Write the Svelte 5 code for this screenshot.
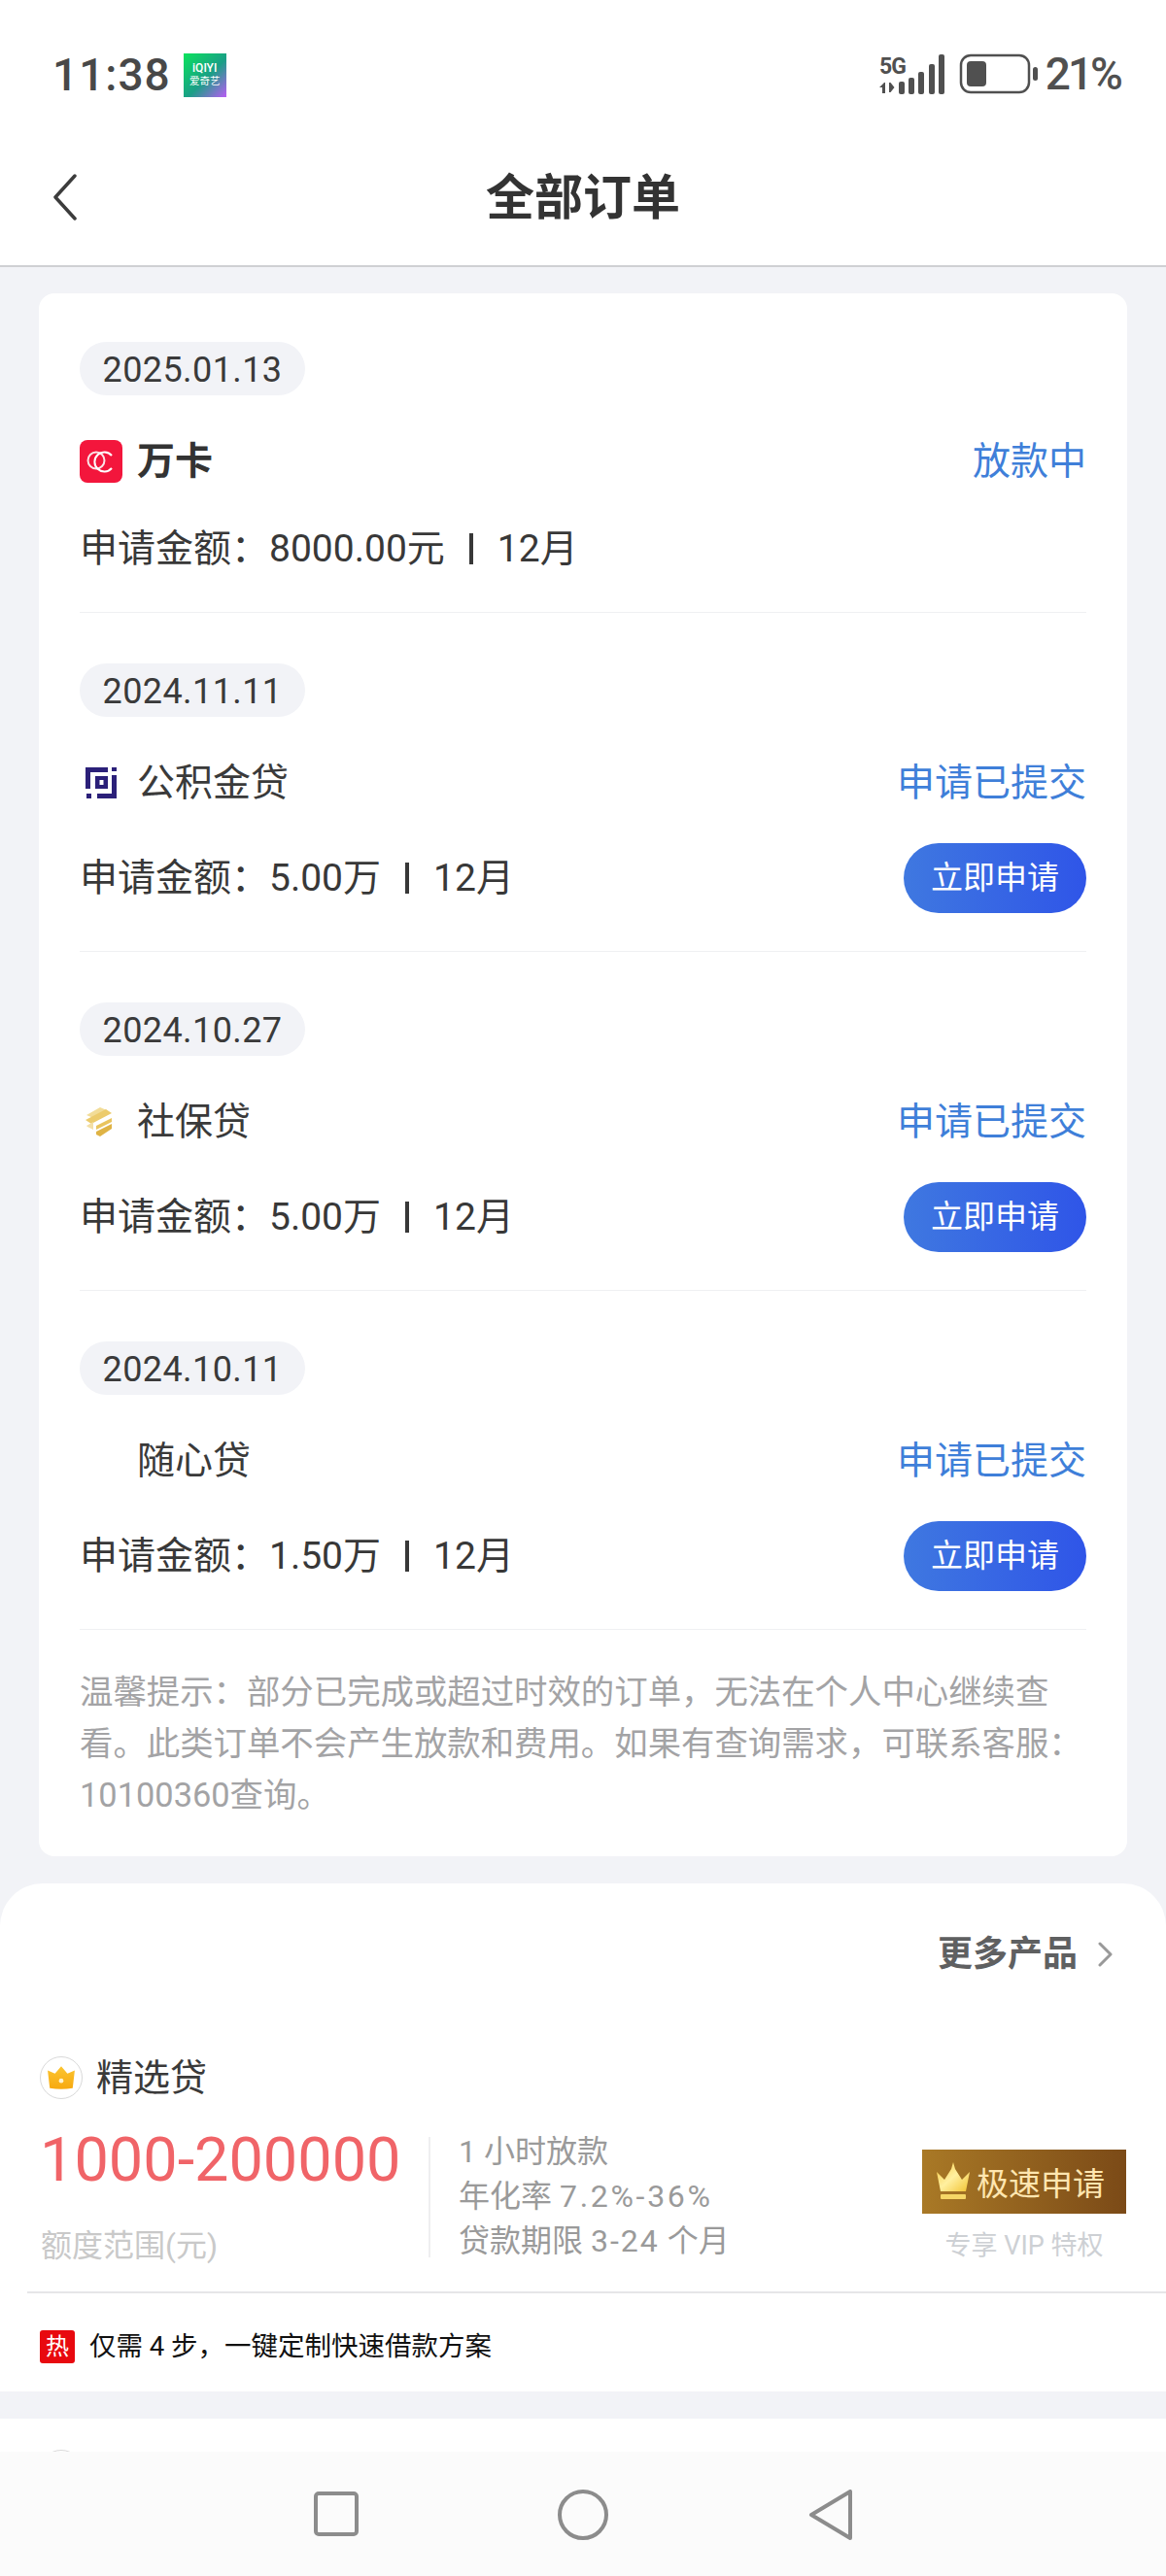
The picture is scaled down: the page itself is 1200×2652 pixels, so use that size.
<script>
  const orders = [
    { date: '2025.01.13', name: '万卡', bold: true, status: '放款中', amount: '8000.00元', term: '12月', logo: 'wanka', apply: false },
    { date: '2024.11.11', name: '公积金贷', status: '申请已提交', amount: '5.00万', term: '12月', logo: 'gjj', apply: true },
    { date: '2024.10.27', name: '社保贷', status: '申请已提交', amount: '5.00万', term: '12月', logo: 'sb', apply: true },
    { date: '2024.10.11', name: '随心贷', status: '申请已提交', amount: '1.50万', term: '12月', logo: '', apply: true }
  ];
</script>

<div class="page">
  <header class="top">
    <div class="status">
      <div class="status-left">
        <span class="time">11:38</span>
        <div class="iqiyi"><b>iQIYI</b><i>爱奇艺</i></div>
      </div>
      <div class="status-right">
        <svg width="70" height="42" viewBox="0 0 70 42" fill="#505050">
          <text x="1" y="21" class="net">5G</text>
          <path d="M6 30l-5 5h3v6h3V30zM11 30h1.500l4 5-4 5H11z" />
          <rect x="21" y="29" width="6" height="13" rx="2" />
          <rect x="31" y="25" width="6" height="17" rx="2" />
          <rect x="41" y="19" width="6" height="23" rx="2" />
          <rect x="52" y="11" width="6" height="31" rx="2" />
          <rect x="62" y="1" width="6" height="41" rx="2" />
        </svg>
        <svg class="battery" width="82" height="42" viewBox="0 0 82 42">
          <rect x="2" y="2" width="70" height="38" rx="10" fill="none" stroke="#505050" stroke-width="2.500" />
          <rect x="8" y="8" width="20" height="26" rx="4" fill="#505050" />
          <rect x="76" y="14" width="5" height="14" rx="2.500" fill="#505050" />
        </svg>
        <span class="pct">21%</span>
      </div>
    </div>
    <div class="titlebar">
      <svg class="back" width="26" height="48" viewBox="0 0 26 48" fill="none" stroke="#3c3c3c" stroke-width="3.500" stroke-linecap="round" stroke-linejoin="round">
        <path d="M23 2L3 24l20 22" />
      </svg>
      <h1>全部订单</h1>
    </div>
  </header>

  <main class="content">
    <section class="card">
      {#each orders as o}
        <article class="order" class:has-btn={o.apply}>
          <div class="date">{o.date}</div>
          <div class="row name-row">
            <div class="name">
              <span class="logo">
                {#if o.logo === 'wanka'}
                  <svg width="44" height="44" viewBox="0 0 44 44">
                    <rect width="44" height="44" rx="8" fill="#f3163c" />
                    <circle cx="17" cy="21" r="8.500" fill="none" stroke="#fbe3e6" stroke-width="2" />
                    <path d="M33 16a10 10 0 1 0 0 13" fill="none" stroke="#fff" stroke-width="2" />
                  </svg>
                {:else if o.logo === 'gjj'}
                  <svg class="inset" width="34" height="34" viewBox="0 0 34 34" fill="#2b2079">
                    <path d="M1 1h23v5H6v17H1z" />
                    <path d="M11 10h13v13H11zM15.500 14v5h4v-5z" fill-rule="evenodd" />
                    <rect x="28" y="1" width="5" height="4" />
                    <path d="M28 9h5v24H13v-5h15z" />
                    <rect x="2" y="28" width="5" height="5" />
                  </svg>
                {:else if o.logo === 'sb'}
                  <svg class="inset" width="30" height="32" viewBox="0 0 30 32">
                    <path d="M2 9L16 1l7 3L9 12z" fill="#f2dc97" />
                    <path d="M1 14L22 3l6 4-21 11z" fill="#eccb6c" />
                    <path d="M2 20L9 16v8l-6-3z" fill="#f3dfa5" />
                    <path d="M12 20l16-8v4L12 24z" fill="#e9c45e" />
                    <path d="M12 26l16-8v5L16 31l-4-2z" fill="#dfb345" />
                  </svg>
                {/if}
              </span>
              <span class:bold={o.bold}>{o.name}</span>
            </div>
            <span class="state">{o.status}</span>
          </div>
          <div class="row amount-row">
            <p class="amount">申请金额：{o.amount}<span class="sep"></span>{o.term}</p>
            {#if o.apply}
              <span class="apply">立即申请</span>
            {/if}
          </div>
        </article>
      {/each}
      <p class="hint">温馨提示：部分已完成或超过时效的订单，无法在个人中心继续查看。此类订单不会产生放款和费用。如果有查询需求，可联系客服：10100360查询。</p>
    </section>

    <section class="sheet">
      <div class="more">
        <span>更多产品</span>
        <svg width="16" height="26" viewBox="0 0 16 26" fill="none" stroke="#999" stroke-width="3" stroke-linecap="round" stroke-linejoin="round"><path d="M2 2l11 11L2 24" /></svg>
      </div>
      <div class="product-name">
        <span class="crown-badge">
          <svg width="30" height="26" viewBox="0 0 28 24">
            <defs>
              <linearGradient id="cr" x1="0" y1="0" x2="0" y2="1">
                <stop offset="0" stop-color="#fbc531" />
                <stop offset="1" stop-color="#f7a90f" />
              </linearGradient>
            </defs>
            <path d="M14 1l6 7 7-3-2 17q-11 2-22 0L1 5l7 3z" fill="url(#cr)" />
            <circle cx="14" cy="15" r="2.200" fill="#fff3cf" />
          </svg>
        </span>
        <span>精选贷</span>
      </div>
      <div class="product">
        <div class="range">
          <div class="big">1000-200000</div>
          <div class="range-label">额度范围(元)</div>
        </div>
        <div class="facts">
          <span>1 小时放款</span>
          <span>年化率 <em>7.2%-36%</em></span>
          <span>贷款期限 <em class="tight">3-24</em> 个月</span>
        </div>
        <div class="cta">
          <div class="gold">
            <svg width="36" height="40" viewBox="0 0 36 40">
              <defs>
                <linearGradient id="gc" x1="0" y1="0" x2="1" y2="1">
                  <stop offset="0" stop-color="#f7c93e" />
                  <stop offset="0.500" stop-color="#fff0a0" />
                  <stop offset="1" stop-color="#f2c230" />
                </linearGradient>
              </defs>
              <path d="M18 0l2 7 7 11 8-8-4 20H5L1 10l8 8 7-11z" fill="url(#gc)" />
              <rect x="5" y="33" width="26" height="5" rx="1" fill="#f6d766" />
            </svg>
            <span>极速申请</span>
          </div>
          <div class="vip">专享 VIP 特权</div>
        </div>
      </div>
      <div class="tip">
        <span class="hot">热</span>
        <span>仅需 4 步，一键定制快速借款方案</span>
      </div>
    </section>
    <div class="band"></div>
    <div class="next"><span class="peek"></span></div>
  </main>

  <nav class="keys">
    <svg width="46" height="46" viewBox="0 0 46 46" fill="none" stroke="#8c8c8c" stroke-width="4"><rect x="2" y="2" width="42" height="42" rx="3" /></svg>
    <svg width="52" height="52" viewBox="0 0 52 52" fill="none" stroke="#8c8c8c" stroke-width="4"><circle cx="26" cy="26" r="24" /></svg>
    <svg width="46" height="52" viewBox="0 0 46 52" fill="none" stroke="#8c8c8c" stroke-width="4" stroke-linejoin="round"><path d="M43 2v48L3 26z" /></svg>
  </nav>
</div>

<style>
  :global(body) {
    margin: 0;
    background: #f2f3f7;
  }

  .page {
    position: relative;
    width: 1200px;
    height: 2652px;
    overflow: hidden;
    background: #f2f3f7;
    font-family: Roboto, "Noto Sans CJK SC", sans-serif;
    color: #333;
  }

  .top {
    height: 273px;
    background: #fff;
    border-bottom: 2px solid #cfd0d3;
  }

  .status {
    height: 136px;
    padding: 0 47px 0 54px;
    display: flex;
    justify-content: space-between;
    align-items: flex-start;
  }

  .status-left {
    display: flex;
    align-items: center;
    gap: 13px;
    padding-top: 54px;
  }

  .time {
    font-size: 46px;
    line-height: 46px;
    font-weight: 500;
    color: #484848;
    letter-spacing: 1px;
  }

  .iqiyi {
    width: 44px;
    height: 45px;
    display: flex;
    flex-direction: column;
    align-items: center;
    justify-content: center;
    background: linear-gradient(135deg, #0be35c 0%, #1a9f86 55%, #b95cf5 100%);
    color: #fff;
    font-size: 11px;
    line-height: 13px;
  }

  .iqiyi b {
    font-weight: 500;
    font-size: 12px;
  }

  .iqiyi i {
    font-style: normal;
    font-size: 10.500px;
  }

  .status-right {
    display: flex;
    align-items: center;
    padding-top: 55px;
  }

  .net {
    font-family: Roboto, sans-serif;
    font-size: 23px;
    font-weight: 700;
    letter-spacing: -1px;
  }

  .battery {
    margin-left: 13px;
  }

  .pct {
    margin-left: 7px;
    font-size: 46px;
    line-height: 42px;
    font-weight: 500;
    color: #505050;
    letter-spacing: -3px;
  }

  .titlebar {
    position: relative;
    height: 137px;
    display: flex;
    align-items: center;
    justify-content: center;
    padding-bottom: 2px;
    box-sizing: border-box;
  }

  .back {
    position: absolute;
    left: 54px;
    top: 43px;
  }

  h1 {
    margin: 0;
    font-size: 50px;
    line-height: 60px;
    font-weight: 700;
    color: #333;
  }

  .content {
    padding-top: 27px;
  }

  .card {
    margin: 0 40px;
    padding: 50px 42px 36px;
    background: #fff;
    border-radius: 16px;
  }

  .order {
    height: 278px;
    border-bottom: 1px solid #eff0f3;
    margin-bottom: 52px;
  }

  .order.has-btn {
    height: 296px;
  }

  .date {
    width: 232px;
    height: 55px;
    border-radius: 28px;
    background: #f2f3f7;
    font-size: 36px;
    line-height: 58px;
    text-align: center;
    letter-spacing: 0.400px;
    color: #3a3a3a;
  }

  .row {
    display: flex;
    justify-content: space-between;
    align-items: center;
  }

  .name-row {
    height: 60px;
    margin-top: 38px;
  }

  .name {
    display: flex;
    align-items: center;
    font-size: 39px;
    line-height: 60px;
    color: #3a3a3a;
  }

  .logo {
    width: 59px;
    display: flex;
    justify-content: flex-start;
  }

  .inset {
    margin-left: 5px;
  }

  .bold {
    font-weight: 700;
    color: #333;
  }

  .state {
    font-size: 39px;
    line-height: 60px;
    color: #3f7fd9;
  }

  .amount-row {
    margin-top: 30px;
    height: 60px;
  }

  .has-btn .amount-row {
    margin-top: 32px;
    height: 72px;
  }

  .amount {
    margin: 0;
    font-size: 39px;
    line-height: 60px;
    color: #383838;
  }

  .sep {
    display: inline-block;
    width: 4px;
    height: 32px;
    margin: 0 25px;
    background: #383838;
    vertical-align: -3px;
  }

  .apply {
    width: 188px;
    height: 72px;
    border-radius: 36px;
    background: linear-gradient(90deg, #3f78e0, #2f55e8);
    color: #fff;
    font-size: 33px;
    line-height: 72px;
    text-align: center;
  }

  .hint {
    margin: -14px 0 0;
    font-size: 34.400px;
    line-height: 53px;
    color: #a3a3a5;
  }

  .sheet {
    margin-top: 28px;
    height: 523px;
    background: #fff;
    border-radius: 44px 44px 0 0;
    overflow: hidden;
  }

  .more {
    display: flex;
    justify-content: flex-end;
    align-items: center;
    gap: 21px;
    padding: 49px 54px 0 0;
    height: 48px;
    font-size: 36px;
    line-height: 48px;
    font-weight: 700;
    color: #5f6061;
  }

  .product-name {
    display: flex;
    align-items: center;
    gap: 14px;
    margin-top: 79px;
    padding-left: 41px;
    font-size: 38px;
    line-height: 48px;
    color: #3a3a3a;
  }

  .crown-badge {
    width: 44px;
    height: 44px;
    box-sizing: border-box;
    border: 1px solid #d9d9d9;
    border-radius: 50%;
    display: flex;
    align-items: center;
    justify-content: center;
  }

  .product {
    display: flex;
    margin: 37px 0 0 28px;
    height: 135px;
    padding-right: 41px;
    padding-bottom: 24px;
    border-bottom: 2px solid #e6e6e8;
  }

  .range {
    width: 415px;
    padding-left: 14px;
    border-right: 2px solid #eeeef0;
    height: 124px;
    box-sizing: border-box;
  }

  .big {
    font-size: 63px;
    line-height: 62px;
    margin: -7px 0 0 -1px;
    color: #f06468;
    white-space: nowrap;
  }

  .range-label {
    margin-top: 38px;
    font-size: 32px;
    line-height: 38px;
    color: #c9c9c9;
    white-space: nowrap;
  }

  .facts {
    flex: 1;
    display: flex;
    flex-direction: column;
    margin-top: -8px;
    padding-left: 29px;
    font-size: 32px;
    line-height: 46px;
    color: #9a9a9a;
    white-space: nowrap;
  }

  .facts em {
    font-style: normal;
    letter-spacing: 2.700px;
  }

  .facts em.tight {
    letter-spacing: 2px;
  }

  .cta {
    width: 210px;
    margin-top: 13px;
  }

  .gold {
    height: 66px;
    display: flex;
    align-items: center;
    gap: 6px;
    padding-left: 14px;
    box-sizing: border-box;
    background: linear-gradient(90deg, #a97926, #7b4a17);
    color: #ffe6b0;
    font-size: 33px;
    white-space: nowrap;
  }

  .vip {
    margin-top: 16px;
    font-size: 27px;
    line-height: 34px;
    text-align: center;
    color: #cdd0d4;
  }

  .tip {
    display: flex;
    align-items: center;
    gap: 15px;
    padding: 38px 0 0 41px;
    font-size: 27.500px;
    line-height: 34px;
    color: #111;
  }

  .hot {
    width: 36px;
    height: 34px;
    border-radius: 3px;
    background: #e8090f;
    color: #fff;
    font-size: 24px;
    line-height: 34px;
    text-align: center;
  }

  .band {
    height: 28px;
    background: #f2f3f7;
  }

  .next {
    height: 200px;
    padding: 32px 0 0 41px;
    box-sizing: border-box;
    background: #fff;
  }

  .peek {
    display: block;
    width: 44px;
    height: 44px;
    box-sizing: border-box;
    border: 1px solid #d9d9d9;
    border-radius: 50%;
  }

  .keys {
    position: absolute;
    left: 0;
    right: 0;
    bottom: 0;
    height: 128px;
    background: #fbfbfb;
  }

  .keys svg {
    position: absolute;
    top: 39px;
  }

  .keys svg:nth-child(1) {
    left: 323px;
    top: 41px;
  }

  .keys svg:nth-child(2) {
    left: 574px;
  }

  .keys svg:nth-child(3) {
    left: 832px;
  }
</style>
